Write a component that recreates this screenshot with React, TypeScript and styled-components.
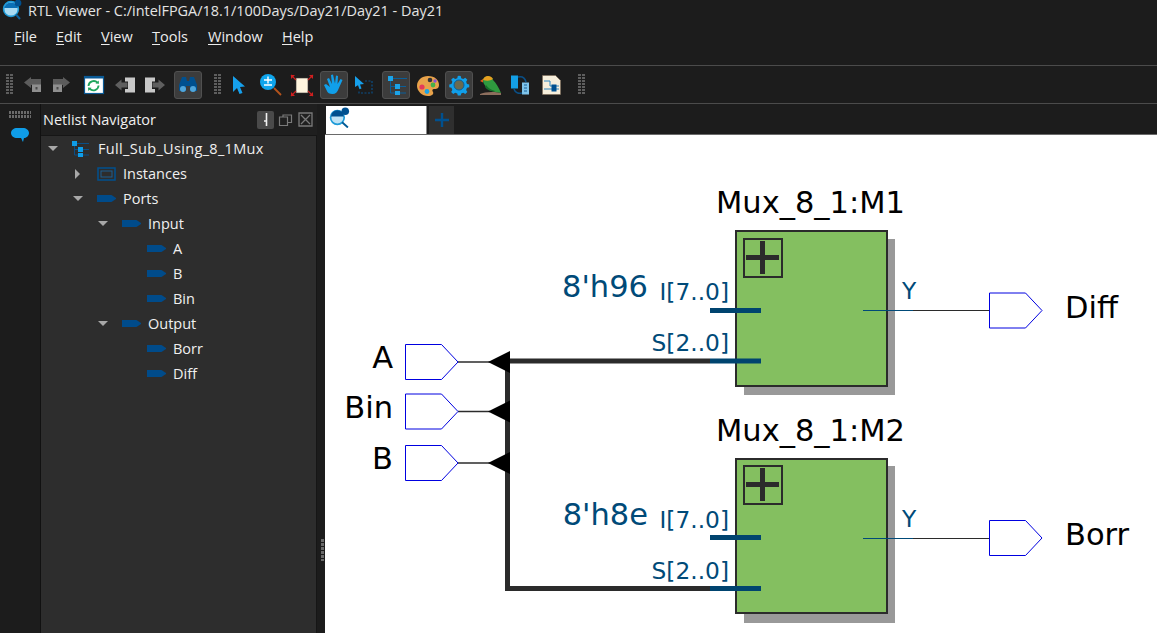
import React from "react";
import styled, { createGlobalStyle } from "styled-components";

const Global = createGlobalStyle`
  html, body { margin: 0; padding: 0; background: #1c1c1c; overflow: hidden; }
  #root { width: 1157px; height: 633px; }
`;
const Shell = styled.div`
  width: 1157px; height: 633px; display: flex; flex-direction: column; overflow: hidden;
  background: #1c1c1c; color: #f2f2f2; font-family: "Open Sans", "Noto Sans", sans-serif;
`;
const TitleBar = styled.div`
  height: 21px; display: flex; align-items: center; gap: 6px; font-size: 14.45px; color: #e4e4e4; line-height: 20px;
`;
const TitleIcon = styled.svg`width: 22px; height: 21px; flex: none;`;
const MenuBar = styled.nav`height: 44px; display: flex; align-items: flex-start; padding: 5px 0 0 14px; box-sizing: border-box;`;
const MenuItem = styled.span<{ $w: number }>`
  width: ${p => p.$w}px; font-size: 14.5px; line-height: 22px; color: #ececec;
  u { text-decoration-thickness: 1px; text-underline-offset: 2px; }
`;
const Toolbar = styled.div`
  height: 37px; box-sizing: content-box; display: flex; align-items: center; padding-left: 6px;
  border-top: 1px solid #4b4b4b; border-bottom: 1px solid #4b4b4b; flex: none;
`;
const Grip = styled.div<{ $ml?: number }>`
  width: 7px; height: 21px; margin-left: ${p => p.$ml ?? 0}px; flex: none;
  background: linear-gradient(90deg, transparent 3px, #1c1c1c 3px 4px, transparent 4px),
    repeating-linear-gradient(#5e5e5e 0 2px, transparent 2px 3px);
`;
const ToolBtn = styled.div<{ $ml: number; $active?: boolean }>`
  width: 28px; height: 28px; margin-left: ${p => p.$ml}px; flex: none; display: flex; align-items: center; justify-content: center;
  box-sizing: border-box; border-radius: 3px;
  background: ${p => (p.$active ? "#3c3c3c" : "transparent")};
  border: 1px solid ${p => (p.$active ? "#505050" : "transparent")};
`;
const Main = styled.div`flex: 1; display: flex; min-height: 0;`;
const LeftStrip = styled.aside`width: 40px; flex: none; display: flex; flex-direction: column; align-items: center; padding-top: 7px; box-sizing: border-box; gap: 8px;`;
const StripGrip = styled.div`
  width: 22px; height: 7px;
  background: linear-gradient(#1c1c1c, #1c1c1c) 0 3px / 100% 1px no-repeat,
    repeating-linear-gradient(90deg, #6a6a6a 0 2px, transparent 2px 3px);
`;
const Panel = styled.section`width: 277px; flex: none; display: flex; flex-direction: column; border-left: 1px solid #111; box-sizing: border-box;`;
const PanelHeader = styled.header`height: 31px; display: flex; align-items: center; padding: 0 3px 0 2px; flex: none; background: #1f1f1f;`;
const PanelTitle = styled.div`flex: 1; font-size: 14.5px; color: #f0f0f0;`;
const HeaderBtn = styled.div<{ $active?: boolean }>`
  width: 17px; height: 18px; margin-left: ${p => (p.$active ? 0 : 3)}px; display: flex; align-items: center; justify-content: center; border-radius: 2px;
  background: ${p => (p.$active ? "#4a4a4a" : "transparent")};
`;
const TreeBody = styled.div`flex: 1; background: #2d2d2d; border-top: 1px solid #161616; border-right: 1px solid #161616;`;
const Row = styled.div<{ $level: number }>`
  height: 25.05px; display: flex; align-items: center; padding-left: ${p => 7 + p.$level * 25}px; font-size: 14.5px; color: #f0f0f0;
`;
const RootLabel = styled.span`letter-spacing: 0.33px;`;
const Arrow = styled.span<{ $dir?: "down" | "right" | "none" }>`
  width: 24px; flex: none; display: block; height: 10px; position: relative;
  &::after {
    content: ""; position: absolute; display: ${p => (p.$dir === "none" ? "none" : "block")};
    ${p => p.$dir === "right"
      ? "left: 2px; top: 0; border-left: 5px solid #a8a8a8; border-top: 5px solid transparent; border-bottom: 5px solid transparent;"
      : "left: 0; top: 2px; border-top: 5px solid #a8a8a8; border-left: 5px solid transparent; border-right: 5px solid transparent;"}
  }
`;
const RowIcon = styled.svg`width: 20px; height: 16px; flex: none; margin-right: 6px;`;
const Splitter = styled.div`width: 8px; flex: none; position: relative; background: #1c1c1c;
  &::after { content: ""; position: absolute; left: 4px; top: 435px; width: 3px; height: 22px;
    background: repeating-linear-gradient(#6a6a6a 0 3px, transparent 3px 4px); }
`;
const Workspace = styled.main`flex: 1; display: flex; flex-direction: column; min-width: 0;`;
const TabBar = styled.div`height: 30px; display: flex; align-items: flex-end; padding-left: 1px; gap: 2px; flex: none; border-bottom: 1px solid #6a6a6a; box-sizing: content-box; background: #1c1c1c;`;
const Tab = styled.div`width: 101px; height: 28px; background: #fff; box-sizing: border-box; padding: 1px 0 0 3px; border-right: 1px solid #888;`;
const AddTab = styled.div`width: 25px; height: 28px; background: #2f2f2f; display: flex; align-items: center; justify-content: center;`;
const Canvas = styled.div`flex: 1; background: #fff; min-height: 0;`;
const Schematic = styled.svg`display: block; width: 832px; height: 498px;`;

const Mag = ({ size = 20 }: { size?: number }) => (
  <svg width={size} height={size} viewBox="0 0 20 20" style={{ display: "block" }}>
    <circle cx="8" cy="10" r="6.5" fill="#bfe3f5" stroke="#1e9bd8" strokeWidth="1.6" />
    <path d="M2 9a6 6 0 0 1 12 0z" fill="#00508f" />
    <path d="M12.5 14.5L18 19.5" stroke="#005a96" strokeWidth="1.8" />
    <circle cx="15.5" cy="4" r="3.6" fill="#00508f" />
  </svg>
);

const Port = () => (
  <RowIcon viewBox="0 0 20 16"><path d="M0 4h14.5l4.5 3v1l-4.5 3H0z" fill="#004b8a" /></RowIcon>
);

const ico = (children: React.ReactNode) => <svg width="26" height="26" viewBox="0 0 26 26">{children}</svg>;

const NavArrow = ({ flip }: { flip?: boolean }) => ico(
  <g transform={flip ? "translate(26 0) scale(-1 1)" : undefined}>
    <path d="M4 10.500l7-5.500v2h10v6H11v3z" fill="#5c5c5c" />
    <rect x="12" y="12.500" width="9" height="7.500" fill="#8f8f8f" />
    <rect x="15.500" y="15" width="2" height="2.500" fill="#4a4a4a" />
  </g>
);
const PageArrow = ({ flip }: { flip?: boolean }) => ico(
  <g transform={flip ? "translate(26 0) scale(-1 1)" : undefined}>
    <path d="M3 13l6.500-5.500v3h6v5h-6v3z" fill="#5f5f5f" />
    <path d="M13 5.500h10v15H13V17h3V9.500h-3z" fill="#c9c9c9" />
  </g>
);

export default function App() {
  return (
    <Shell>
      <Global />
      <TitleBar>
        <TitleIcon viewBox="0 0 22 21">
          <circle cx="11" cy="9" r="7.400" fill="#a8daf2" stroke="#1e9bd8" strokeWidth="1.600" />
          <path d="M4.200 8a7 7 0 0 1 13.600 0z" fill="#0a6fb5" />
          <path d="M16 14.500L20 19" stroke="#0a5f9a" strokeWidth="2" />
          <circle cx="18" cy="3" r="3.400" fill="#00508f" />
        </TitleIcon>
        RTL Viewer - C:/intelFPGA/18.1/100Days/Day21/Day21 - Day21
      </TitleBar>
      <MenuBar>
        <MenuItem $w={42}><u>F</u>ile</MenuItem>
        <MenuItem $w={45}><u>E</u>dit</MenuItem>
        <MenuItem $w={51}><u>V</u>iew</MenuItem>
        <MenuItem $w={56}><u>T</u>ools</MenuItem>
        <MenuItem $w={74}><u>W</u>indow</MenuItem>
        <MenuItem $w={40}><u>H</u>elp</MenuItem>
      </MenuBar>
      <Toolbar>
        <Grip />
        <ToolBtn $ml={6}><NavArrow /></ToolBtn>
        <ToolBtn $ml={0}><NavArrow flip /></ToolBtn>
        <ToolBtn $ml={5}>
          {ico(<g>
            <rect x="3.500" y="4.500" width="19" height="17" fill="#fff" stroke="#0a5a96" strokeWidth="1.200" />
            <rect x="3" y="4" width="20" height="2.500" fill="#0a5a96" />
            <path d="M7.500 14a5.200 5.200 0 0 1 9-3.300M17.600 13.500a5.200 5.200 0 0 1-9 3.200" fill="none" stroke="#1fa45c" strokeWidth="1.800" />
            <path d="M14.500 11.500l3.500.2-.3-3.300zM10.500 15.800l-3.500-.2.3 3.400z" fill="#1fa45c" />
          </g>)}
        </ToolBtn>
        <ToolBtn $ml={3}><PageArrow /></ToolBtn>
        <ToolBtn $ml={2}><PageArrow flip /></ToolBtn>
        <ToolBtn $ml={5} $active>
          {ico(<g>
            <path d="M4 13l3-8h4l1 4h2l1-4h4l3 8v6h-7v-5h-4v5H4z" fill="#00508f" />
            <circle cx="8" cy="17" r="3" fill="#4fa6dc" />
            <circle cx="18" cy="17" r="3" fill="#4fa6dc" />
          </g>)}
        </ToolBtn>
        <Grip $ml={12} />
        <ToolBtn $ml={4}>
          {ico(<path d="M7 4l12 10.500-5 .5 2.500 6-3 1-2.500-6L7 20z" fill="#16a0ec" />)}
        </ToolBtn>
        <ToolBtn $ml={3}>
          {ico(<g>
            <circle cx="11" cy="10" r="8" fill="#0fa5ec" />
            <path d="M7 8h8M11 4.500v7M7 13h8" stroke="#fff" strokeWidth="1.400" />
            <path d="M17 16l7 7" stroke="#b4531c" strokeWidth="1.800" />
          </g>)}
        </ToolBtn>
        <ToolBtn $ml={4}>
          {ico(<g>
            <rect x="7" y="6" width="12" height="15" fill="#fff6df" stroke="#333" strokeWidth=".6" />
            <path d="M2 3l5 5M24 3l-5 5M2 24l5-5M24 24l-5-5" stroke="#c62020" strokeWidth="1.200" />
            <path d="M2 3h4L2 7zM24 3h-4l4 4zM2 24h4l-4-4zM24 24h-4l4-4z" fill="#d11f1f" />
          </g>)}
        </ToolBtn>
        <ToolBtn $ml={4} $active>
          {ico(<path d="M3 13l2-1 4 3-3-8 2-1 3 6-1-9 2-.5 2 9 1-8 2 .5-.500 8 3-5 2 1-4 9c-1 3-3 5-6 5-3 0-5-1-6-4z" fill="#109fea" />)}
        </ToolBtn>
        <ToolBtn $ml={1}>
          {ico(<g>
            <path d="M5 4l9 8-4 .5 1.500 4-2 .7-1.500-4L5 15z" fill="#16a0ec" />
            <path d="M15 9h7v12H9v-2" fill="none" stroke="#0a4f86" strokeWidth="1.200" strokeDasharray="2 1.500" />
          </g>)}
        </ToolBtn>
        <ToolBtn $ml={5} $active>
          {ico(<g>
            <rect x="5" y="4" width="5" height="5" fill="#1ba3e8" />
            <rect x="12" y="12" width="5" height="5" fill="#1ba3e8" />
            <rect x="12" y="19" width="5" height="4" fill="#1ba3e8" />
            <path d="M7.500 9v12H12M7.500 14.500H12M10 6.500h14M17 14.500h6M17 21h6" stroke="#0a5f9a" strokeWidth="1" fill="none" />
          </g>)}
        </ToolBtn>
        <ToolBtn $ml={4}>
          {ico(<g>
            <path d="M13 4c7 0 11 4 11 9 0 4-3 4-5 4-2 0-2 2-1 3 1 2-1 4-5 4C7 24 2 19 2 14 2 8 7 4 13 4z" fill="#e8a24a" />
            <circle cx="7" cy="15" r="2.600" fill="#e53a5a" />
            <circle cx="12" cy="19.500" r="2.400" fill="#1ba3e8" />
            <circle cx="18" cy="13" r="2.400" fill="#44b04a" />
            <circle cx="15" cy="8" r="2.300" fill="#333" />
            <circle cx="20" cy="9" r="1.700" fill="#8a4fd0" />
          </g>)}
        </ToolBtn>
        <ToolBtn $ml={3} $active>
          {ico(<g>
            <path d="M13 2.500l2 .3.600 2.600 2.400 1 2.300-1.400 2.400 2.400-1.400 2.300 1 2.400 2.600.6v3.400l-2.600.6-1 2.400 1.400 2.300-2.400 2.400-2.300-1.400-2.400 1-.6 2.300h-3.400l-.6-2.300-2.400-1-2.300 1.400-2.400-2.400 1.400-2.300-1-2.400-2.600-.6v-3.400l2.600-.6 1-2.400-1.400-2.300 2.400-2.400 2.300 1.400 2.400-1 .6-2.600z" fill="#109fea" transform="translate(1.800 1.500) scale(.86)" />
            <circle cx="13" cy="13" r="5" fill="#6a6a50" stroke="#0d5f96" strokeWidth="1" />
          </g>)}
        </ToolBtn>
        <ToolBtn $ml={3}>
          {ico(<g>
            <path d="M3 22c4-2 14-3 21-1v2H3z" fill="#8d6e5d" />
            <path d="M6 8c1-5 9-5 10 0 3 3 6 8 8 13-5-1-13-2-15-6-2-3-3-4-3-7z" fill="#2f9a3f" />
            <path d="M6 8c1-5 8-5 10-1-3 2-6 2-10 1z" fill="#e8a020" />
            <path d="M6 7L3 9l3 1.500z" fill="#e05a1a" />
            <path d="M9 13c2 3 5 5 9 6-4 1-8-1-10-4z" fill="#15702a" />
          </g>)}
        </ToolBtn>
        <ToolBtn $ml={1}>
          {ico(<g>
            <rect x="5" y="3.500" width="7" height="13" fill="#139fe5" />
            <rect x="16" y="10.500" width="7" height="12" fill="#7fc4ea" />
            <path d="M12 5c4-1 7 1 8 5M16 21c-4 1-7-1-8-4" fill="none" stroke="#0a4f86" strokeWidth="1.600" />
            <path d="M18 13h3m-3 3h3m-3 3h3" stroke="#1a5f94" strokeWidth="1.200" />
          </g>)}
        </ToolBtn>
        <ToolBtn $ml={4}>
          {ico(<g>
            <path d="M4.500 3.500h13l5 5v14h-18z" fill="#f7efdc" stroke="#7c6a55" strokeWidth=".6" />
            <path d="M6 9h6v5h9M6 17h15" stroke="#2f86c0" strokeWidth="1" fill="none" />
            <rect x="13.500" y="12.500" width="5" height="7" fill="#00508f" />
          </g>)}
        </ToolBtn>
        <Grip $ml={13} />
      </Toolbar>
      <Main>
        <LeftStrip>
          <StripGrip />
          <svg width="20" height="20" viewBox="0 0 20 20">
            <path d="M7 2h6c3 0 6 2 6 5s-3 5-5 5l-1 4c-1-1-1-3-2-4H7C4 12 1 10 1 7s3-5 6-5z" fill="#0f9de8" />
          </svg>
        </LeftStrip>
        <Panel>
          <PanelHeader>
            <PanelTitle>Netlist Navigator</PanelTitle>
            <HeaderBtn $active>
              <svg width="15" height="15" viewBox="0 0 15 15"><path d="M8.500 1v8M6 9h2.500v5" stroke="#f2f2f2" strokeWidth="1.600" fill="none" /></svg>
            </HeaderBtn>
            <HeaderBtn>
              <svg width="15" height="15" viewBox="0 0 15 15"><path d="M1.500 5h8v8.500h-8zM5 5V3h8.500v7.500H9.500" stroke="#7a7a7a" strokeWidth="1.200" fill="none" /></svg>
            </HeaderBtn>
            <HeaderBtn>
              <svg width="15" height="15" viewBox="0 0 15 15"><path d="M1 1h13v13H1zM3 3l9 9M12 3l-9 9" stroke="#7a7a7a" strokeWidth="1.300" fill="none" /></svg>
            </HeaderBtn>
          </PanelHeader>
          <TreeBody>
            <Row $level={0}>
              <Arrow $dir="down" />
              <RowIcon viewBox="0 0 20 16">
                <rect x="0" y="0" width="5" height="5" fill="#0f9de8" />
                <rect x="6" y="6" width="5" height="5" fill="#0f9de8" />
                <rect x="6" y="12" width="5" height="4" fill="#0f9de8" />
                <path d="M2.500 5v9H6M2.500 8.500H6M5 2.500h12M11 8.500h6M11 14h6" stroke="#0a4f86" strokeWidth="1" fill="none" />
              </RowIcon>
              <RootLabel>Full_Sub_Using_8_1Mux</RootLabel>
            </Row>
            <Row $level={1}>
              <Arrow $dir="right" />
              <RowIcon viewBox="0 0 20 16">
                <rect x="1" y="2" width="17" height="12" fill="none" stroke="#00508f" strokeWidth="1.500" />
                <rect x="4" y="5" width="11" height="6" fill="none" stroke="#1f5f90" strokeWidth="1" />
              </RowIcon>
              Instances
            </Row>
            <Row $level={1}><Arrow $dir="down" /><Port />Ports</Row>
            <Row $level={2}><Arrow $dir="down" /><Port />Input</Row>
            <Row $level={3}><Arrow $dir="none" /><Port />A</Row>
            <Row $level={3}><Arrow $dir="none" /><Port />B</Row>
            <Row $level={3}><Arrow $dir="none" /><Port />Bin</Row>
            <Row $level={2}><Arrow $dir="down" /><Port />Output</Row>
            <Row $level={3}><Arrow $dir="none" /><Port />Borr</Row>
            <Row $level={3}><Arrow $dir="none" /><Port />Diff</Row>
          </TreeBody>
        </Panel>
        <Splitter />
        <Workspace>
          <TabBar>
            <Tab><Mag size={21} /></Tab>
            <AddTab>
              <svg width="16" height="16" viewBox="0 0 16 16"><path d="M8 1v14M1 8h14" stroke="#00508f" strokeWidth="2.400" /></svg>
            </AddTab>
          </TabBar>
          <Canvas>
            <Schematic viewBox="325 135 832 498" fontFamily="'DejaVu Sans', sans-serif">
              {[
                { dy: 0, top: 231, h: 155, shadowTop: 239, shadowH: 156 },
                { dy: 227, top: 459, h: 154, shadowTop: 466, shadowH: 157 },
              ].map(({ dy, top, h, shadowTop, shadowH }) => (
                <g key={dy}>
                  <rect x="744" y={shadowTop} width="151" height={shadowH} fill="#999" />
                  <rect x="736" y={top} width="151" height={h} fill="#84bf60" stroke="#2b2b2b" strokeWidth="2" />
                  <rect x="744" y={239 + dy} width="38" height="38" fill="none" stroke="#2b2b2b" strokeWidth="2" />
                  <path d={`M746 ${257.500 + dy}h33M762.500 ${241 + dy}v33`} stroke="#2b2b2b" strokeWidth="5" />
                  <path d={`M863 ${310.500 + dy + (dy ? 1 : 0)}h50`} stroke="#004a78" strokeWidth="1" />
                  <path d={`M913 ${310.500 + dy + (dy ? 1 : 0)}h76`} stroke="#2b2b2b" strokeWidth="1" />
                  <text x="729" y={300 + dy + (dy ? 1 : 0)} fontSize="23.300" fill="#004a78" textAnchor="end">I[7..0]</text>
                  <text x="729" y={351 + dy + (dy ? 1 : 0)} fontSize="23.300" fill="#004a78" textAnchor="end">S[2..0]</text>
                  <text x="902" y={299 + dy + (dy ? 1 : 0)} fontSize="23.300" fill="#004a78">Y</text>
                </g>
              ))}
              <path d="M508 361H710M507.500 361V590M505 588.500H710" stroke="#2b2b2b" strokeWidth="5" fill="none" />
              <path d="M710 310.500h51M710 361h51M710 537.500h51M710 588.500h51" stroke="#00446f" strokeWidth="5" />
              {[362, 411.500, 463].map(cy => (
                <g key={cy}>
                  <path d={`M458 ${cy}h32`} stroke="#2b2b2b" strokeWidth="1.500" />
                  <path d={`M488 ${cy}l22-11v22z`} fill="#000" />
                  <path d={`M405.500 ${cy - 17.500}h36l16.500 17.500-16.500 17.500h-36z`} fill="#fff" stroke="#0000e0" strokeWidth="1" />
                </g>
              ))}
              {[310.500, 538].map(cy => (
                <path key={cy} d={`M989.500 ${cy - 17.500}h36l16.500 17.500-16.500 17.500h-36z`} fill="#fff" stroke="#0000e0" strokeWidth="1" />
              ))}
              <text x="716" y="213" fontSize="30.500" fill="#000">Mux_8_1:M1</text>
              <text x="716" y="441" fontSize="30.500" fill="#000">Mux_8_1:M2</text>
              <text x="648" y="297" fontSize="30.500" fill="#004a78" textAnchor="end">8'h96</text>
              <text x="648" y="525" fontSize="30.500" fill="#004a78" textAnchor="end">8'h8e</text>
              <text x="393" y="368" fontSize="30.500" fill="#000" textAnchor="end">A</text>
              <text x="393" y="418" fontSize="30.500" fill="#000" textAnchor="end">Bin</text>
              <text x="393" y="469" fontSize="30.500" fill="#000" textAnchor="end">B</text>
              <text x="1065" y="318" fontSize="30.500" fill="#000">Diff</text>
              <text x="1065" y="545" fontSize="30.500" fill="#000">Borr</text>
            </Schematic>
          </Canvas>
        </Workspace>
      </Main>
    </Shell>
  );
}
